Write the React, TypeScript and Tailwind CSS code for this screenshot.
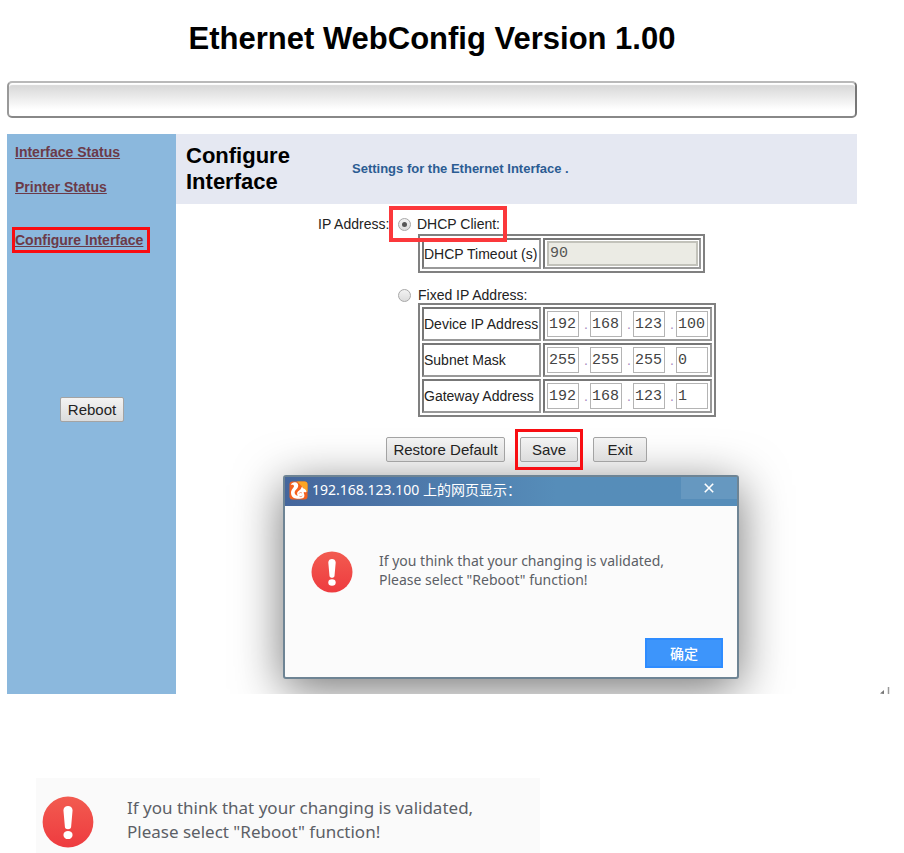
import { useState } from 'react'
import type { ReactNode } from 'react'

interface AddressRow {
  id: string
  label: string
  octets: string[]
}

const ADDRESS_ROWS: AddressRow[] = [
  { id: 'device', label: 'Device IP Address', octets: ['192', '168', '123', '100'] },
  { id: 'subnet', label: 'Subnet Mask', octets: ['255', '255', '255', '0'] },
  { id: 'gateway', label: 'Gateway Address', octets: ['192', '168', '123', '1'] },
]

const RADIO =
  'relative h-[13px] w-[13px] shrink-0 appearance-none rounded-full border border-[#a8a8a8] bg-linear-to-b from-[#f2f2f2] to-[#dcdcdc] checked:after:absolute checked:after:inset-[3px] checked:after:rounded-full checked:after:bg-[#555] checked:after:content-[""]'

const TABLE = 'border-separate border-spacing-[2px] border-2 border-[#808080] bg-white'
const CELL = 'border-2 border-t-[#777] border-l-[#777] border-r-[#999] border-b-[#999]'
const SIDE_LINK = 'text-[14px] leading-4 font-bold text-[#6b3a48] underline'

function FormButton({ children, className = '' }: { children: ReactNode; className?: string }) {
  return (
    <button
      type="button"
      className={`h-[25px] rounded-[2px] border border-[#a3a3a3] bg-linear-to-b from-[#f3f3f3] to-[#dcdcdc] text-[15px] leading-5 text-[#222] ${className}`}
    >
      {children}
    </button>
  )
}

function AlertIcon({ className }: { className: string }) {
  return (
    <svg viewBox="0 0 42 42" className={className} aria-hidden="true">
      <defs>
        <linearGradient id="alert-fill" x1="0" y1="0" x2="0" y2="1">
          <stop offset="0" stopColor="#f25b50" />
          <stop offset="1" stopColor="#ee3b3f" />
        </linearGradient>
      </defs>
      <circle cx="21" cy="21" r="20.5" fill="url(#alert-fill)" />
      <path d="M17.300 11.500c0-4.600 7.400-4.600 7.400 0l-1.200 13.500c-.2 2.400-4.800 2.400-5 0z" fill="#fff" />
      <ellipse cx="21" cy="31.500" rx="3.700" ry="3.300" fill="#fff" />
    </svg>
  )
}

function BrowserLogo() {
  return (
    <svg viewBox="0 0 19 19" className="h-[19px] w-[19px] shrink-0" aria-hidden="true">
      <rect x="0.500" y="0.500" width="18" height="18" rx="3" fill="#f4611f" />
      <path d="M8 .5h7.500a3 3 0 0 1 3 3V11z" fill="#fba524" />
      <path
        d="M1.800 4C2.500 1.700 4.500 1 6.300 1.300c2.500.4 3.500 2.700 2.700 4.700C8.200 8 5.600 9.200 5.600 11.500c0 2 1.600 3.100 3.400 3.300-1-1-1.200-2.400-.5-3.800.8-1.500 2.500-1.800 3.300-3.100.5-.8.6-1.700 1.400-2.400.3.800.4 1.300 1 1.800 1.700.4 2.900 1.700 3.400 3.600-1 .3-1.900.4-2.800.2-.2 1.300.6 2 .6 3.300 0 1.700-1.200 3-3.200 3.100-1.800.3-3.700.3-5.300 0C3.900 17 2 14.900 2 11.900c0-3.300 2.700-4.900 3-6.600.2-1.300-1.400-1.900-3.200-1.300z"
        fill="#fff"
      />
      <path d="M10 12.500c.7-1.200 2.200-1.300 3-.3M10.500 15.300c1 .5 2.100.3 2.800-.4" fill="none" stroke="#f58a66" strokeWidth="0.900" />
    </svg>
  )
}

function Dialog({ onClose }: { onClose: () => void }) {
  return (
    <div
      role="dialog"
      aria-labelledby="dialog-title"
      className="absolute top-[341px] left-[107px] w-[456px] rounded-[3px] border-2 border-[#6e8494] bg-[#fbfbfb] shadow-[0_10px_48px_rgba(0,0,0,0.55)]"
    >
      <div className="flex h-[29px] items-start justify-between bg-linear-to-r from-[#45669c] to-[#568db9] to-60%">
        <div className="flex items-center gap-1 pt-[3px] pl-1">
          <BrowserLogo />
          <h2
            id="dialog-title"
            className='font-["Noto_Sans","Noto_Sans_CJK_SC",sans-serif] text-[14px] leading-5 text-white'
          >
            192.168.123.100 上的网页显示：
          </h2>
        </div>
        <button
          type="button"
          aria-label="Close"
          onClick={onClose}
          className="flex h-[22px] w-[56px] items-center justify-center bg-[#6698c0]"
        >
          <svg viewBox="0 0 10 10" className="h-[10px] w-[10px]" aria-hidden="true">
            <path d="M.8.8l8.400 8.400M9.200.8L.8 9.200" stroke="#fff" strokeWidth="1.600" />
          </svg>
        </button>
      </div>
      <div className="flex items-start gap-[26px] pt-[45px] pl-[26px]">
        <AlertIcon className="h-[42px] w-[42px] shrink-0" />
        <p className='font-["Noto_Sans",sans-serif] text-[14px] leading-[19px] text-[#5c5f66]'>
          If you think that your changing is validated,
          <br />
          Please select "Reboot" function!
        </p>
      </div>
      <div className="flex justify-end pt-[45px] pr-[14px] pb-[9px]">
        <button
          type="button"
          onClick={onClose}
          className='h-[30px] w-[78px] border-2 border-[#2e8cff] bg-[#3d95fb] font-["Noto_Sans_CJK_SC",sans-serif] text-[14px] leading-5 font-medium text-white'
        >
          确定
        </button>
      </div>
    </div>
  )
}

export default function App() {
  const [mode, setMode] = useState('dhcp')
  const [open, setOpen] = useState(true)

  return (
    <div className='min-h-screen bg-white font-["Liberation_Sans",Arial,sans-serif] text-[#222]'>
      <div className="relative pr-[47px] pl-[7px]">
        <h1 className="pt-[21px] text-center text-[31px] leading-9 font-bold text-black">
          Ethernet WebConfig Version 1.00
        </h1>

        <div className="mt-6 h-[37px] rounded-[5px] border-2 border-t-[#b9b9b9] border-r-[#777] border-b-[#888] border-l-[#999] bg-linear-to-b from-[#d4d4d4] to-white to-80% shadow-[inset_0_2px_1px_#fff]" />

        <div className="mt-4 flex h-[560px]">
          <nav className="flex w-[169px] shrink-0 flex-col items-start bg-[#8bb8dd] pt-[10px] pl-2">
            <a href="#status" className={SIDE_LINK}>Interface Status</a>
            <a href="#printer" className={`mt-[19px] ${SIDE_LINK}`}>Printer Status</a>
            <a
              href="#configure"
              className={`mt-[32px] -ml-[3px] w-[138px] border-[3px] border-[#f80d12] py-[2px] whitespace-nowrap ${SIDE_LINK}`}
            >
              Configure Interface
            </a>
            <FormButton className="mt-[144px] ml-[45px] w-[64px]">Reboot</FormButton>
          </nav>

          <main className="relative min-w-0 flex-1 overflow-hidden">
            <header className="flex h-[70px] items-center bg-[#e5e8f2] pl-[10px]">
              <h2 className="w-[166px] text-[22px] leading-[26px] font-bold text-black">
                Configure
                <br />
                Interface
              </h2>
              <p className="text-[13px] leading-4 font-bold text-[#2b5c93]">
                Settings for the Ethernet Interface .
              </p>
            </header>

            <form className="relative z-10 pl-[142px] text-[14px] leading-4">
              <div className="flex items-start gap-2 pt-3">
                <span className="w-[72px] whitespace-nowrap">IP Address:</span>
                <div>
                  <div className="relative flex items-center gap-[6px]">
                    <input
                      id="mode-dhcp"
                      type="radio"
                      name="mode"
                      checked={mode === 'dhcp'}
                      onChange={() => setMode('dhcp')}
                      className={RADIO}
                    />
                    <label htmlFor="mode-dhcp">DHCP Client:</label>
                    <span className="absolute -top-[10px] -left-[9px] h-[36px] w-[118px] border-4 border-[#fb383b]" />
                  </div>
                  <table className={`mt-[2px] ml-5 ${TABLE}`}>
                    <tbody>
                      <tr>
                        <td className={`w-[119px] whitespace-nowrap ${CELL}`}>
                          <label htmlFor="timeout">DHCP Timeout (s)</label>
                        </td>
                        <td className={`py-px pr-px pl-[2px] ${CELL}`}>
                          <input
                            id="timeout"
                            defaultValue="90"
                            readOnly
                            className='block h-[25px] w-[151px] border-2 border-[#c2c2ba] bg-[#ebebe4] px-px font-["Liberation_Mono",monospace] text-[15px] leading-4 text-[#555]'
                          />
                        </td>
                      </tr>
                    </tbody>
                  </table>

                  <div className="mt-[14px] flex items-center gap-[7px]">
                    <input
                      id="mode-fixed"
                      type="radio"
                      name="mode"
                      checked={mode === 'fixed'}
                      onChange={() => setMode('fixed')}
                      className={RADIO}
                    />
                    <label htmlFor="mode-fixed">Fixed IP Address:</label>
                  </div>
                  <table className={`ml-5 ${TABLE}`}>
                    <tbody>
                      {ADDRESS_ROWS.map(row => (
                        <tr key={row.id}>
                          <td className={`w-[119px] whitespace-nowrap ${CELL}`}>
                            <label htmlFor={`${row.id}-0`}>{row.label}</label>
                          </td>
                          <td className={`px-[2px] py-[2px] ${CELL}`}>
                            <div className="flex items-center">
                              {row.octets.map((octet, i) => (
                                <div key={i} className="flex items-center">
                                  {i > 0 && <span className="w-[11px] pl-[5px] text-[#a88bc0]">.</span>}
                                  <input
                                    id={`${row.id}-${i}`}
                                    aria-label={`${row.label} ${i + 1}`}
                                    defaultValue={octet}
                                    className='block h-[26px] w-[32px] border border-[#b4b4b4] bg-white px-px font-["Liberation_Mono",monospace] text-[15px] leading-4 text-[#444]'
                                  />
                                </div>
                              ))}
                            </div>
                          </td>
                        </tr>
                      ))}
                    </tbody>
                  </table>
                </div>
              </div>

              <div className="mt-3 flex items-center gap-[10px] pl-[68px]">
                <FormButton className="w-[119px] whitespace-nowrap">Restore Default</FormButton>
                <span className="flex border-[3px] border-[#f80d12] px-[2px] py-[5px]">
                  <FormButton className="w-[58px] border-[#8096a0]">Save</FormButton>
                </span>
                <FormButton className="w-[54px]">Exit</FormButton>
              </div>
            </form>

            {open && <Dialog onClose={() => setOpen(false)} />}
          </main>
        </div>

        <svg viewBox="0 0 10 7" className="absolute right-[14px] bottom-0 h-[7px] w-[10px]" aria-hidden="true">
          <path d="M0 6.500L4 3v4z" fill="#777" />
          <path d="M8.500 0v7" stroke="#999" strokeWidth="1.500" />
        </svg>
      </div>

      <div className="mt-[84px] mr-[364px] ml-[36px] flex h-[75px] items-start gap-[33px] overflow-hidden bg-[#fafafa] pt-[18px] pl-[6px]">
        <AlertIcon className="h-[52px] w-[52px] shrink-0" />
        <p className='font-["Noto_Sans",sans-serif] text-[17px] leading-6 whitespace-nowrap text-[#5c5f66]'>
          If you think that your changing is validated,
          <br />
          Please select "Reboot" function!
        </p>
      </div>
    </div>
  )
}
